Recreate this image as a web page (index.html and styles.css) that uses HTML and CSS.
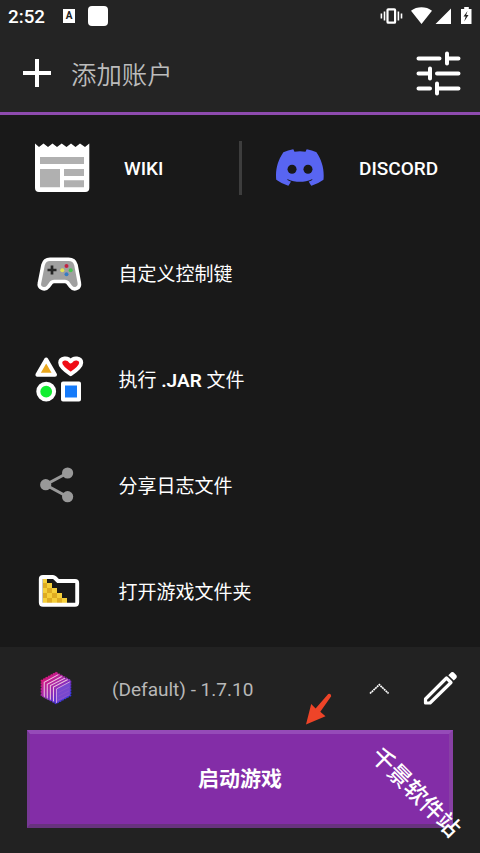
FILE: index.html
```html
<!DOCTYPE html>
<html lang="zh-CN">
<head>
<meta charset="utf-8">
<title>Launcher</title>
<link rel="stylesheet" href="styles.css">
</head>
<body>
<div class="screen">
  <header class="top">
    <div class="status">
      <span class="time">2:52</span>
      <span class="badge-a">A</span>
      <span class="badge-blank"></span>
      <svg class="status-icons" width="100" height="24" viewBox="376 4 100 24">
        <g fill="none" stroke="#fff" stroke-width="1.6"><path d="M381.4 13.5v5M384.5 11.5v9M401.5 13.5v5M398.4 11.5v9"/><rect x="387.5" y="9.3" width="7.6" height="13.4" rx=".8" stroke-width="2.2"/></g>
        <path d="M411 10.8C417 6.2 426 6.2 432 10.8L421.5 24ZM435.5 24L451 8.5V24ZM461 9h3.200V7h4.600v2H471.500V24H461Z" fill="#fff"/>
        <path d="M467.500 11l-4 5.500h2.200l-1.500 5 4.300-6.500h-2.300z" fill="#222"/>
      </svg>
    </div>
    <div class="account">
      <svg class="plus" width="28" height="28" viewBox="0 0 28 28"><path d="M14 0V28M0 14H28" stroke="#fff" stroke-width="4"/></svg>
      <span class="account-name">添加账户</span>
      <svg class="sliders" width="46" height="46" viewBox="415 51 46 46"><path d="M418.500 58.500H439.500M449 58.500H458.500M418.500 73.500H428M437 73.500H458.500M418.500 88.500H430M439 88.500H458.500M447 53.500V63.500M430 68.500V78.500M437 83.500V93.500" fill="none" stroke="#fff" stroke-width="4" stroke-linecap="round"/></svg>
    </div>
  </header>

  <main class="menu">
    <div class="row">
      <svg class="icon" viewBox="-30 -30 60 60">
        <path d="M-25-24.500L-21-21L-16.500-24.500L-12-21L-7.500-24.500L-3-21L1.700-24.500L6.500-21L11-24.500L15.500-21L20-24.500L25-21L29.300-24.500V20Q29.300 24 25.300 24H-21Q-25 24-25 20Z" fill="#fff"/>
        <path d="M-20-11H24V-4H-20ZM-20 1H0V19.300H-20ZM4 1H24V8H4ZM4 12.200H24V19.300H4Z" fill="#b0b0b0"/>
      </svg>
      <span class="label wiki">WIKI</span>
      <span class="divider"></span>
      <svg class="discord-icon" width="48" height="37" viewBox="0 0 24 18.300"><path fill="#5865f2" d="M20.317 1.500A19.800 19.800 0 0 0 15.432 0a.074.074 0 0 0-.079.037c-.21.375-.444.865-.608 1.250a18.270 18.270 0 0 0-5.487 0A12.640 12.640 0 0 0 8.641.037.077.077 0 0 0 8.562 0 19.740 19.740 0 0 0 3.677 1.500C.533 6.200-.32 10.700.099 15.200a.082.082 0 0 0 .031.057 19.900 19.900 0 0 0 5.993 3.030.078.078 0 0 0 .084-.028c.462-.63.874-1.295 1.226-1.994a.076.076 0 0 0-.042-.106 13.100 13.100 0 0 1-1.872-.892c.13-.1.250-.19.370-.29 3.928 1.793 8.180 1.793 12.061 0 .12.100.25.200.373.290a12.300 12.300 0 0 1-1.873.892.077.077 0 0 0-.041.107c.36.698.772 1.362 1.225 1.993a.076.076 0 0 0 .084.028 19.840 19.840 0 0 0 6.002-3.030.077.077 0 0 0 .032-.054c.5-5.177-.838-9.674-3.549-13.660z"/><circle cx="8.020" cy="10.050" r="2.250" fill="#191919"/><circle cx="15.990" cy="10.050" r="2.250" fill="#191919"/></svg>
      <span class="label discord">DISCORD</span>
    </div>
    <div class="row">
      <svg class="icon" viewBox="-30 -30 60 60">
        <path d="M-10-14.700H8.500C13-14.700 15-13 16-9L19.300 8.500C20.500 14.500 14 17 10.500 12.500L7.500 8.500Q6.500 7.500 5 7.500H-6Q-7.500 7.500-8.500 8.500L-11.500 12.500C-15 17-22 14.500-20.500 8.500L-17-9C-16-13-14-14.700-10-14.700Z" fill="#a0a0a0" stroke="#fff" stroke-width="3.600"/>
        <path d="M-12.500-4H-3.500M-8-8.500V.5" stroke="#252525" stroke-width="2.700"/>
        <circle cx="6.500" cy="-8" r="2" fill="#c22343"/><circle cx="2.300" cy="-3.800" r="2" fill="#e4e252"/><circle cx="10.700" cy="-3.800" r="2" fill="#48c451"/><circle cx="6.500" cy=".3" r="2" fill="#367bc4"/>
      </svg>
      <span class="label">自定义控制键</span>
    </div>
    <div class="row">
      <svg class="icon" viewBox="-30 -30 60 60">
        <g stroke="#fff" stroke-width="4" stroke-linejoin="round">
          <path d="M-13.800-19.500L-22.600-4.200H-5Z" fill="#eaa71c"/>
          <path d="M10.700-4.800C6-8 .2-12 .2-16.200C.2-21.200 8-22 10.700-17.600C13.400-22 21.200-21.200 21.200-16.200C21.200-12 15.400-8 10.700-4.800Z" fill="#f00d16"/>
          <circle cx="-13.800" cy="12.600" r="7.900" fill="#12ee32"/>
          <rect x="3" y="4.500" width="16" height="16" fill="#167bfa"/>
        </g>
      </svg>
      <span class="label">执行 <b class="latin">.JAR</b> 文件</span>
    </div>
    <div class="row">
      <svg class="icon" viewBox="-30 -30 60 60"><path d="M7.500-12L-14.500-.3L7.500 11.700" fill="none" stroke="#999" stroke-width="3"/><g fill="#999"><circle cx="7.600" cy="-12" r="5.600"/><circle cx="-14.300" cy="-.3" r="5.600"/><circle cx="7.600" cy="11.700" r="5.600"/></g></svg>
      <span class="label">分享日志文件</span>
    </div>
    <div class="row">
      <svg class="icon" viewBox="-30 -30 60 60">
        <path d="M-17-12.500H-13V-8H-8V-3H-3V2H2V7H7V12H-17Z" fill="#f5cf3a"/>
        <path d="M-17-8h4v5h-4zM-13-3h5v5h-5zM-17 2h4v5h-4zM-8 2h5v5h-5zM-13 7h5v5h-5zM-3 7h5v5h-5z" fill="#deab22"/>
        <path d="M-17-14H-7Q-6-14-5-13L-2-10H15Q17.200-10 17.200-8V11.500Q17.200 13.800 15 13.800H-17Q-19.200 13.800-19.200 11.500V-12Q-19.200-14-17-14Z" fill="none" stroke="#fff" stroke-width="3.900"/>
      </svg>
      <span class="label">打开游戏文件夹</span>
    </div>
  </main>

  <footer class="bottom">
    <div class="version">
      <svg class="cube" width="32" height="34" viewBox="39 670 34 36">
        <defs><linearGradient id="cube" x1="0" y1="0" x2=".8" y2="1"><stop offset="0" stop-color="#ef0b65"/><stop offset=".5" stop-color="#a12bae"/><stop offset="1" stop-color="#263bed"/></linearGradient></defs>
        <path d="M56 671.500L71.500 680V696L56 704.500L40.500 696V680Z" fill="url(#cube)"/>
        <path d="M43.500 698V682L59 673.500M46.700 700V684L62.500 675.500M50 701.500V685.500L65.500 677.500M53.300 703V687L68.500 679" fill="none" stroke="#edc3df" stroke-width="1.100"/>
        <path d="M56.500 689L71 681.500V696L56.500 704Z" fill="#7848cf"/>
        <path d="M56.500 704V689L71.500 681" fill="none" stroke="#d7a5e2"/>
        <path d="M58 693L70 687M58 697L70 691M58 701L70 695" stroke="#9156cb" stroke-width=".7"/>
        <path d="M56 671.500L71.500 680V696L56 704.500L40.500 696V680Z" fill="none" stroke="url(#cube)" stroke-width="1.500" stroke-dasharray="2 1"/>
      </svg>
      <span class="version-name">(Default) - 1.7.10</span>
      <svg class="chevron" width="20" height="12" viewBox="369 682 20 12"><path d="M370 692.500L379.300 683.700L388.600 692.500" fill="none" stroke="#fff" stroke-width="1.700" stroke-dasharray="1.900 .5"/></svg>
      <svg class="pencil" width="36" height="36" viewBox="421 670 36 36"><path d="M424.500 699L445.500 678L450 682.500L429 703H424.500Z" fill="none" stroke="#fff" stroke-width="3.200" stroke-linejoin="round"/><path d="M447.300 675.300L449.300 673.300Q451.300 671 453.500 673.200L454.700 674.400Q457 676.500 454.700 678.700L452.800 680.600Z" fill="#fff"/></svg>
    </div>
    <div class="play">启动游戏</div>
    <svg class="arrow" width="28" height="34" viewBox="304 692 28 34"><path d="M328.200 694Q331.300 693 331.200 696.300L320.300 711.800L325.500 716.300L306 724.500L311.200 704L315.600 708.500Z" fill="#ee4428"/></svg>
    <span class="watermark">千景软件站</span>
  </footer>
</div>
</body>
</html>
```
FILE: styles.css
```css
* { box-sizing: border-box; }
body { margin: 0; background: #191919; color: #fff; font-family: Roboto, "Noto Sans CJK SC", sans-serif; }
svg { display: block; flex: none; }
.screen { width: 480px; height: 853px; display: flex; flex-direction: column; overflow: hidden; }
.top { height: 115px; flex: none; background: #242424; border-bottom: 3px solid #8e4baf; }
.status { height: 32px; display: flex; align-items: center; padding-left: 8px; }
.time { width: 55px; font-size: 18.800px; font-weight: 500; line-height: 32px; padding-top: 1px; }
.badge-a { width: 12px; height: 14px; background: #fff; color: #222; font-size: 10px; font-weight: 700; line-height: 14px; text-align: center; }
.badge-blank { width: 20px; height: 20px; margin-left: 13px; background: #fff; border-radius: 4px; }
.status-icons { margin-left: auto; margin-right: 4px; }
.account { height: 80px; display: flex; align-items: center; padding: 3px 19px 0 23px; }
.plus { margin-top: -1px; }
.account-name { margin-left: 20px; padding-top: 2px; color: #bcbcbc; font-size: 25.400px; font-weight: 350; line-height: 36px; }
.sliders { margin-left: auto; }
.menu { height: 532px; flex: none; background: #191919; }
.row { height: 105.800px; display: flex; align-items: center; padding-left: 30px; }
.icon { width: 60px; height: 60px; }
.label { margin-left: 28.500px; padding-top: 3px; font-size: 19px; font-weight: 400; line-height: 28px; white-space: pre; }
.latin { font-weight: 600; }
.label.wiki, .label.discord { font-weight: 500; padding-top: 2px; }
.label.wiki { width: 115px; margin-left: 34px; }
.divider { width: 3px; height: 54px; background: #3d3d3d; }
.discord-icon { margin-left: 34px; }
.label.discord { margin-left: 35px; }
.bottom { position: relative; height: 206px; flex: none; background: #222; padding: 0 27px; }
.version { height: 83px; display: flex; align-items: center; padding-left: 13px; }
.cube { margin-top: -2px; }
.version-name { width: 257px; flex: none; margin-left: 40px; color: #b8b8b8; font-size: 19px; line-height: 28px; padding-top: 2px; }
.chevron { margin-top: 1px; }
.pencil { margin-left: 33px; margin-top: -2px; }
.play { height: 98px; width: 426px; border: solid; border-width: 4px 4px 4px 3px; border-color: #954bb8 #8840a5 #68327f #763894; background: #832da7; display: flex; align-items: center; justify-content: center; font-size: 21px; font-weight: 600; line-height: 30px; padding-left: 1px; }
.arrow { position: absolute; left: 304px; top: 45px; }
.watermark { position: absolute; left: 355px; top: 130px; width: 120px; text-align: center; font-size: 23px; line-height: 32px; font-weight: 500; white-space: nowrap; transform: rotate(45deg); }
```
